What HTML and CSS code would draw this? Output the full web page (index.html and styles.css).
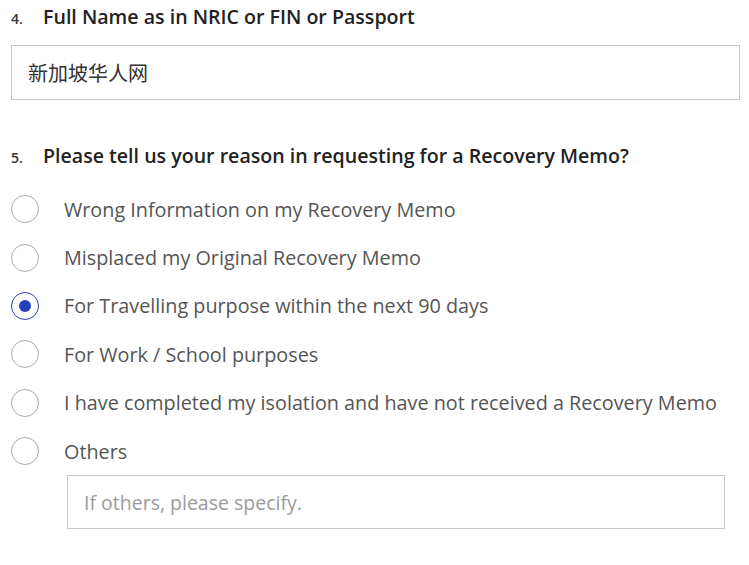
FILE: index.html
```html
<!DOCTYPE html>
<html lang="en">
<head>
<meta charset="UTF-8">
<meta name="viewport" content="width=device-width, initial-scale=1.0">
<title>Recovery Memo Request</title>
<link rel="stylesheet" href="styles.css">
</head>
<body>
<form class="form">
    <div class="question">
        <label class="q-label" for="fullname"><span class="q-num">4.</span>Full Name as in NRIC or FIN or Passport</label>
        <input class="text-input name-input" type="text" id="fullname" name="fullname" value="新加坡华人网">
    </div>

    <div class="question q-reason">
        <div class="q-label"><span class="q-num">5.</span>Please tell us your reason in requesting for a Recovery Memo?</div>
        <div class="options">
            <label class="option"><input type="radio" name="reason" value="wrong"><span class="radio"></span>Wrong Information on my Recovery Memo</label>
            <label class="option"><input type="radio" name="reason" value="misplaced"><span class="radio"></span>Misplaced my Original Recovery Memo</label>
            <label class="option"><input type="radio" name="reason" value="travel" checked><span class="radio"></span>For Travelling purpose within the next 90 days</label>
            <label class="option"><input type="radio" name="reason" value="work"><span class="radio"></span>For Work / School purposes</label>
            <label class="option"><input type="radio" name="reason" value="isolation"><span class="radio"></span>I have completed my isolation and have not received a Recovery Memo</label>
            <label class="option"><input type="radio" name="reason" value="others"><span class="radio"></span>Others</label>
        </div>
        <input class="text-input other-input" type="text" name="other" placeholder="If others, please specify.">
    </div>
</form>
</body>
</html>
```

FILE: styles.css
```css
body {
    font-family: 'Open Sans', 'Noto Sans CJK SC', sans-serif;
    background-color: #fff;
    margin: 0;
    padding: 0;
}
.form {
    padding: 0 9px 0 11px;
}
.q-label {
    display: flex;
    align-items: baseline;
    height: 34px;
    line-height: 34px;
    font-size: 19.6px;
    font-weight: 600;
    color: #222;
}
.q-num {
    width: 32px;
    font-size: 14px;
    font-weight: 600;
    color: #333;
}
.text-input {
    display: block;
    width: 100%;
    height: 55px;
    margin-top: 11px;
    padding: 0 16px;
    border: 1px solid #c6c6c6;
    border-radius: 0;
    box-sizing: border-box;
    font-family: inherit;
    font-size: 19.5px;
    color: #333;
    outline: none;
}
.name-input {
    font-size: 20px;
}
.text-input::placeholder {
    color: #9b9b9b;
}
.q-reason {
    margin-top: 39px;
}
.options {
    margin-top: 12px;
    display: flex;
    flex-direction: column;
}
.option {
    display: flex;
    align-items: center;
    height: 48.4px;
    font-size: 19.8px;
    color: #555;
    cursor: pointer;
}
.option input {
    display: none;
}
.radio {
    width: 28px;
    height: 28px;
    margin-right: 25px;
    border: 1px solid #a9a9a9;
    border-radius: 50%;
    box-sizing: border-box;
    display: flex;
    align-items: center;
    justify-content: center;
    flex-shrink: 0;
}
.option input:checked + .radio {
    border-color: #2b45b4;
}
.option input:checked + .radio::after {
    content: "";
    width: 12px;
    height: 12px;
    border-radius: 50%;
    background-color: #2341b8;
}
.other-input {
    width: 658px;
    height: 54px;
    margin: 0 0 0 56px;
}
```
